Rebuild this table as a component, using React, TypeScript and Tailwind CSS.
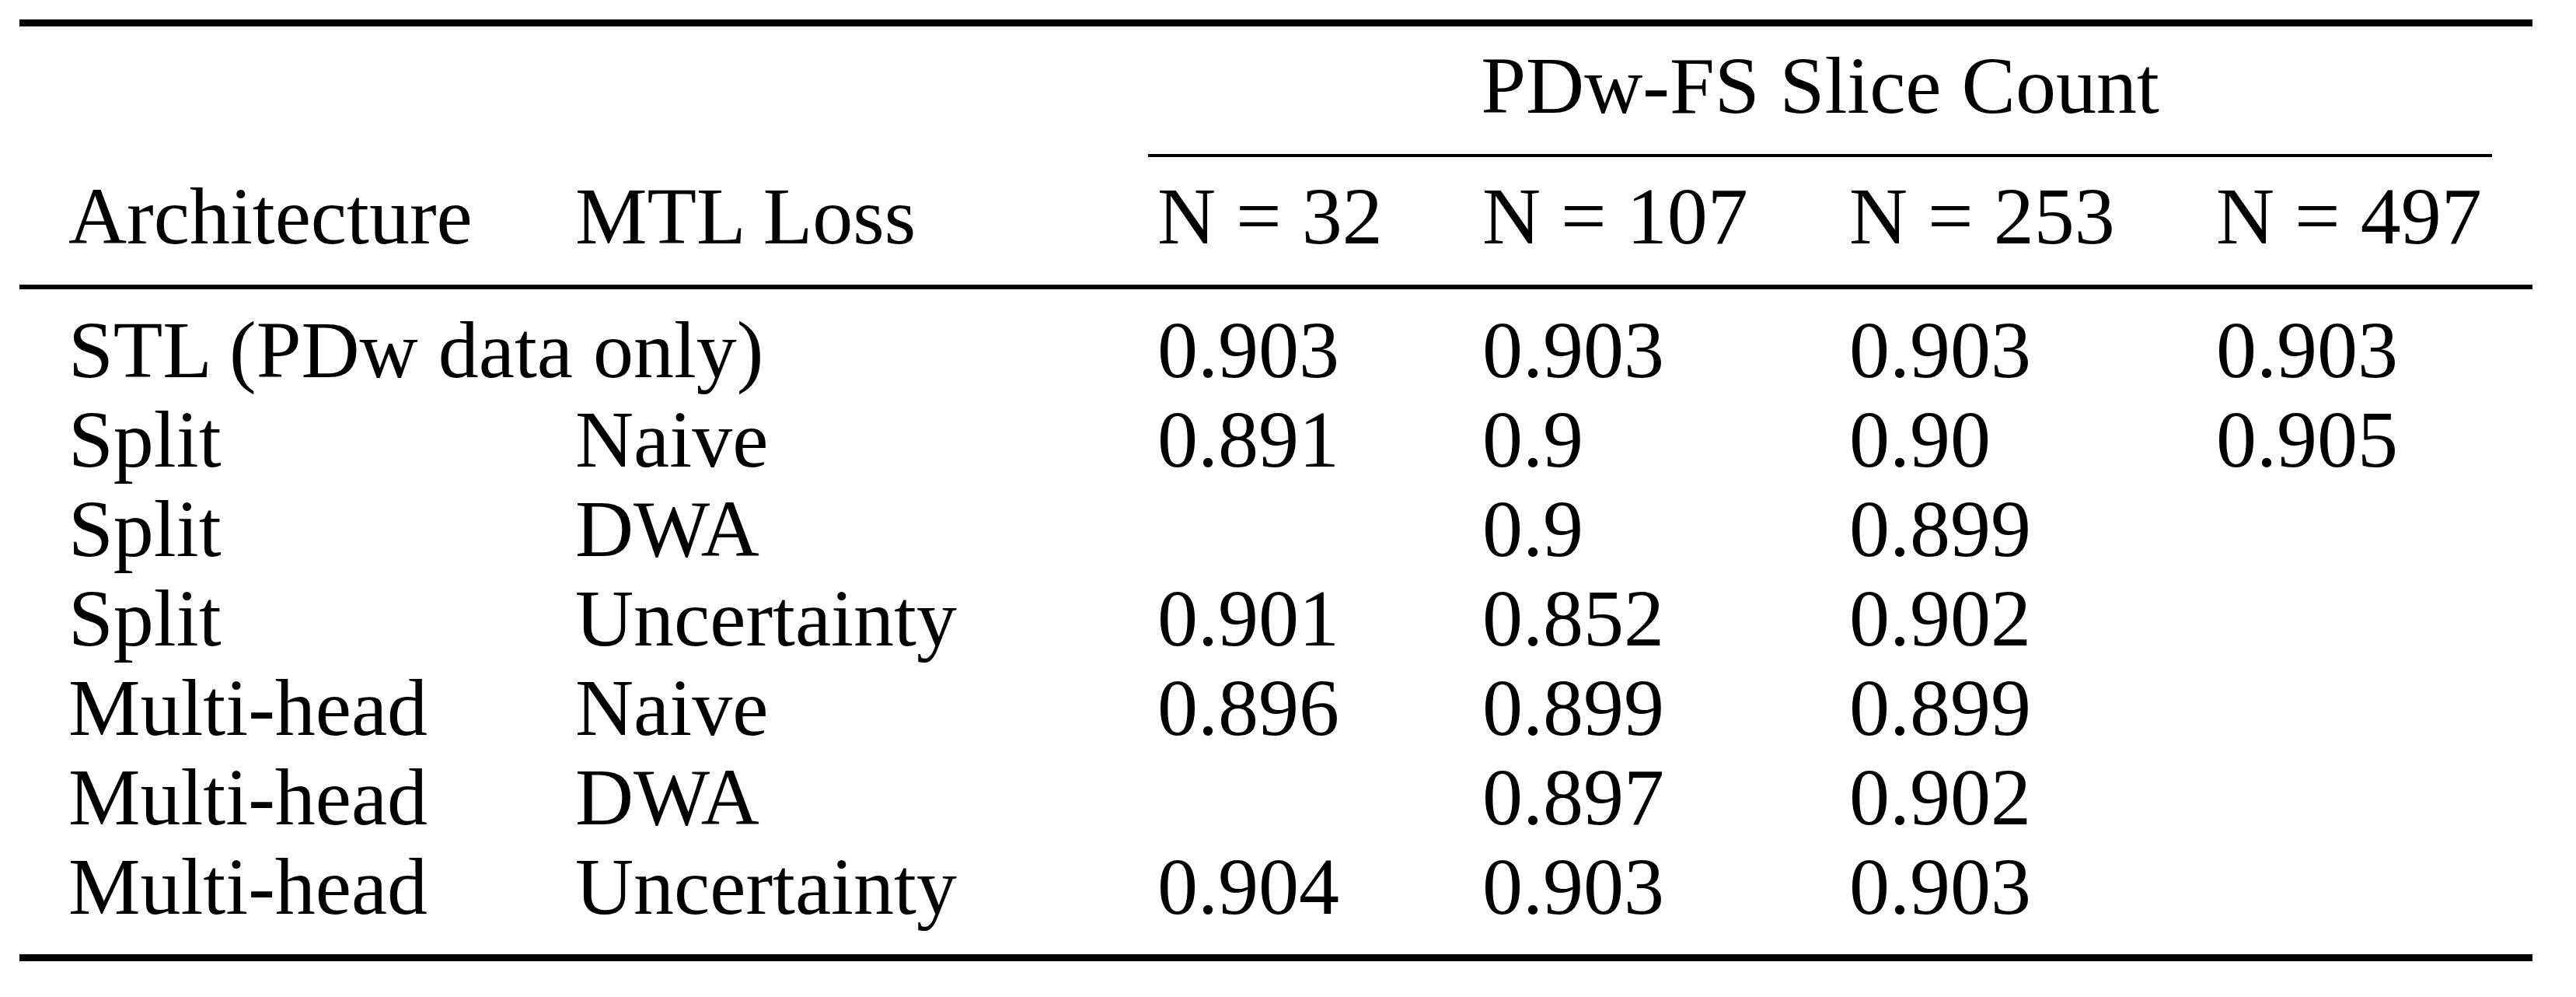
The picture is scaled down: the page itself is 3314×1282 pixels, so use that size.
const rows: { arch: string; loss?: string; span?: boolean; vals: string[] }[] = [
  { arch: "STL (PDw data only)", span: true, vals: ["0.903", "0.903", "0.903", "0.903"] },
  { arch: "Split", loss: "Naive", vals: ["0.891", "0.9", "0.90", "0.905"] },
  { arch: "Split", loss: "DWA", vals: ["", "0.9", "0.899", ""] },
  { arch: "Split", loss: "Uncertainty", vals: ["0.901", "0.852", "0.902", ""] },
  { arch: "Multi-head", loss: "Naive", vals: ["0.896", "0.899", "0.899", ""] },
  { arch: "Multi-head", loss: "DWA", vals: ["", "0.897", "0.902", ""] },
  { arch: "Multi-head", loss: "Uncertainty", vals: ["0.904", "0.903", "0.903", ""] },
];

export default function App() {
  return (
    <div className="w-[3314px] h-[1282px] bg-white text-black overflow-hidden font-['Liberation_Serif',serif] text-[104px]">
      <div className="ml-[25px] w-[3233px] pt-[25px] flex flex-col">
        {/* top rule */}
        <div className="h-[9px] bg-black" />

        {/* multicolumn header */}
        <div className="mt-[19px] ml-[1452px] w-[1729px] text-center leading-[114px]">
          PDw-FS Slice Count
        </div>
        <div className="mt-[31px] ml-[1452px] w-[1729px] h-[4px] bg-black" />

        {/* column headers */}
        <div className="mt-[19px] pl-[63px] grid grid-cols-[652px_749px_418px_472px_472px_1fr] leading-[114px] whitespace-nowrap">
          <div>Architecture</div>
          <div>MTL Loss</div>
          <div>N = 32</div>
          <div>N = 107</div>
          <div>N = 253</div>
          <div>N = 497</div>
        </div>

        {/* mid rule */}
        <div className="mt-[31px] h-[6px] bg-black" />

        {/* body */}
        <div className="mt-[20px] pl-[63px] grid grid-cols-[652px_749px_418px_472px_472px_1fr] leading-[115px] whitespace-nowrap">
          {rows.map((r, i) =>
            [
              r.span ? (
                <div key={`a${i}`} className="col-span-2">
                  {r.arch}
                </div>
              ) : (
                [
                  <div key={`a${i}`}>{r.arch}</div>,
                  <div key={`l${i}`}>{r.loss}</div>,
                ]
              ),
              r.vals.map((v, j) => (
                <div key={`v${i}-${j}`} className="min-h-[115px]">
                  {v}
                </div>
              )),
            ]
          )}
        </div>

        {/* bottom rule */}
        <div className="mt-[30px] h-[9px] bg-black" />
      </div>
    </div>
  );
}
